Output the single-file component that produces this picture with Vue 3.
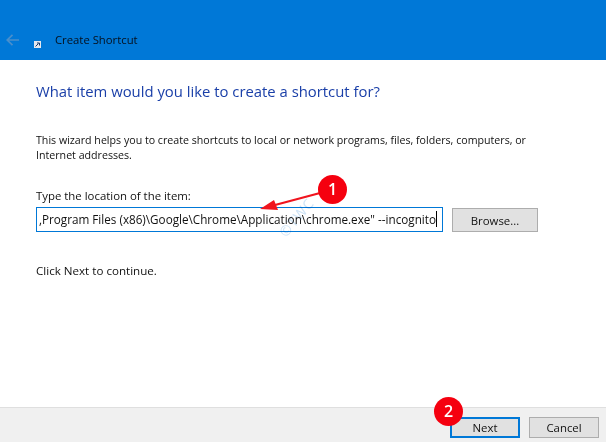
<script setup>
const title = 'Create Shortcut'
</script>

<template>
  <div class="wizard">
    <header class="titlebar">
      <svg class="back" width="13" height="12" viewBox="0 0 13 12"><path d="M13 6H1.5M6.5 .8L1.2 6l5.3 5.2" fill="none" stroke="#4a8fcb" stroke-width="1.7"/></svg>
      <svg class="appicon" width="7" height="7" viewBox="0 0 7 7"><rect width="7" height="7" fill="#e4e8ee"/><path d="M1.5 5.5L4.5 2.5M3 2h2.5v2.5" fill="none" stroke="#1a3a6a" stroke-width="1"/></svg>
      <span class="title">{{ title }}</span>
    </header>
    <main class="body">
      <h1 class="heading">What item would you like to create a shortcut for?</h1>
      <p class="intro">This wizard helps you to create shortcuts to local or network programs, files, folders, computers, or Internet addresses.</p>
      <label class="label">Type the location of the item:</label>
      <div class="row">
        <div class="input"><span class="val">,Program Files (x86)\Google\Chrome\Application\chrome.exe" --incognito</span><i class="caret"></i></div>
        <button class="btn browse">Browse...</button>
      </div>
      <p class="hint">Click Next to continue.</p>
    </main>
    <footer class="footer">
      <button class="btn next">Next</button>
      <button class="btn">Cancel</button>
    </footer>

    <svg class="overlay" width="606" height="442" viewBox="0 0 606 442">
      <text class="mark" x="286" y="238" transform="rotate(-50 286 238)" font-size="14" letter-spacing="1">©TWC</text>
      <path d="M320 193L275 205" stroke="#f0141e" stroke-width="2.2" fill="none"/>
      <path d="M260 209L274 200L278 210Z" fill="#f0141e"/>
    </svg>
    <span class="badge one">1</span>
    <span class="badge two">2</span>
  </div>
</template>

<style>
html, body { margin: 0; background: #fff; }
</style>

<style scoped>
.wizard {
  position: relative;
  width: 606px;
  height: 442px;
  display: flex;
  flex-direction: column;
  overflow: hidden;
  font-family: "Open Sans", "Noto Sans", sans-serif;
  font-size: 11px;
  color: #111;
  background: #fff;
}
.titlebar {
  height: 60px;
  flex: none;
  background: #0078d7;
  display: flex;
  align-items: flex-end;
  box-sizing: border-box;
  padding: 0 0 12px 6px;
  position: relative;
}
.back { margin-bottom: 2px; }
.appicon { margin-left: 15px; margin-bottom: 0; }
.title { margin-left: 14px; font-size: 11.3px; line-height: 16px; color: #06101c; }
.body { flex: 1; padding: 0 0 0 36px; }
.heading {
  margin: 21px 0 0;
  font-size: 14.85px;
  font-weight: 400;
  line-height: 20px;
  color: #1a3fa8;
}
.intro {
  margin: 32px 0 0;
  width: 530px;
  line-height: 15px;
  font-size: 10.65px;
}
.label {
  display: block;
  margin-top: 25px;
  line-height: 15px;
  font-size: 11.4px;
}
.row { display: flex; align-items: flex-start; margin-top: 4px; }
.input {
  width: 407px;
  height: 25px;
  box-sizing: border-box;
  border: 1px solid #0078d7;
  display: flex;
  align-items: center;
  justify-content: flex-end;
  overflow: hidden;
  padding: 0 5px 2px 0;
  white-space: nowrap;
  font-size: 11.7px;
}
.caret { width: 1px; height: 16px; background: #000; flex: none; }
.val { flex: none; }
.btn {
  width: 86px;
  height: 24px;
  box-sizing: border-box;
  border: 1px solid #adadad;
  background: #e1e1e1;
  font: inherit;
  font-size: 11.4px;
  color: #111;
  padding: 0;
}
.browse { margin-left: 9px; margin-top: 1px; }
.hint { margin: 31px 0 0; line-height: 15px; font-size: 11.6px; }
.footer {
  height: 35px;
  flex: none;
  box-sizing: border-box;
  background: #f0f0f0;
  border-top: 1px solid #dfdfdf;
  display: flex;
  justify-content: flex-end;
  gap: 9px;
  padding: 9px 7px 0 0;
}
.footer .btn { height: 21px; width: 70px; }
.next { border: 2px solid #0078d7; }
.overlay { position: absolute; left: 0; top: 0; pointer-events: none; }
.mark {
  fill: #cfe4f6;
  font-family: "Noto Sans", sans-serif;
  mix-blend-mode: multiply;
}
.badge {
  position: absolute;
  width: 29px;
  height: 29px;
  border-radius: 50%;
  background: #f5000f;
  color: #fff;
  font-size: 16px;
  font-weight: 600;
  text-align: center;
  line-height: 29px;
}
.one { left: 318px; top: 175px; }
.two { left: 434px; top: 397px; }
</style>
